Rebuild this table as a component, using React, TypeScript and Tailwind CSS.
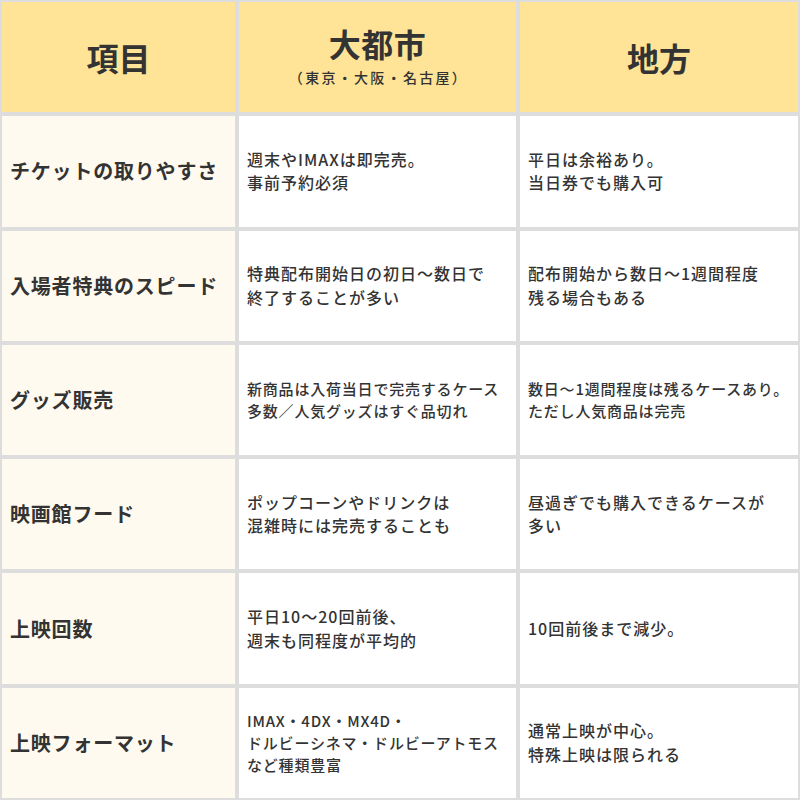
const rows: { label: string; city: string[]; local: string[]; smallCity?: boolean; smallLocal?: boolean }[] = [
  {
    label: "チケットの取りやすさ",
    city: ["週末やIMAXは即完売。", "事前予約必須"],
    local: ["平日は余裕あり。", "当日券でも購入可"],
  },
  {
    label: "入場者特典のスピード",
    city: ["特典配布開始日の初日〜数日で", "終了することが多い"],
    local: ["配布開始から数日〜1週間程度", "残る場合もある"],
  },
  {
    label: "グッズ販売",
    city: ["新商品は入荷当日で完売するケース", "多数／人気グッズはすぐ品切れ"],
    local: ["数日〜1週間程度は残るケースあり。", "ただし人気商品は完売"],
    smallCity: true,
    smallLocal: true,
  },
  {
    label: "映画館フード",
    city: ["ポップコーンやドリンクは", "混雑時には完売することも"],
    local: ["昼過ぎでも購入できるケースが", "多い"],
  },
  {
    label: "上映回数",
    city: ["平日10〜20回前後、", "週末も同程度が平均的"],
    local: ["10回前後まで減少。"],
  },
  {
    label: "上映フォーマット",
    city: ["IMAX・4DX・MX4D・", "ドルビーシネマ・ドルビーアトモス", "など種類豊富"],
    local: ["通常上映が中心。", "特殊上映は限られる"],
    smallCity: true,
  },
];

const Body = ({ lines, small }: { lines: string[]; small?: boolean }) => (
  <div className="bg-white flex items-center px-[8px]">
    <p
      className={
        small
          ? "text-[15px] leading-[22px] tracking-[0.8px] font-medium text-[#333333]"
          : "text-[16px] leading-[23.5px] tracking-[1px] font-medium text-[#333333]"
      }
    >
      {lines.map((l, i) => (
        <span key={i} className="block whitespace-nowrap">
          {l}
        </span>
      ))}
    </p>
  </div>
);

export default function App() {
  return (
    <div
      className="w-[800px] h-[800px] grid grid-cols-[233px_277px_1fr] grid-rows-7 gap-[4px] p-[2px] bg-[#dddddd] text-[#333333]"
      style={{ fontFamily: "'Noto Sans CJK JP', 'Noto Sans', sans-serif" }}
    >
      {/* Header */}
      <div className="bg-[#ffe396] flex items-center justify-center">
        <span className="text-[32px] font-bold">項目</span>
      </div>
      <div className="bg-[#ffe396] flex flex-col items-center justify-center pb-[6px]">
        <span className="text-[32px] font-bold leading-[40px] tracking-[0.5px]">大都市</span>
        <span className="text-[14px] font-medium leading-[18px] tracking-[2.3px] mt-[5px] pl-[2px]">（東京・大阪・名古屋）</span>
      </div>
      <div className="bg-[#ffe396] flex items-center justify-center">
        <span className="text-[32px] font-bold">地方</span>
      </div>

      {rows.map((r) => (
        <div key={r.label} className="contents">
          <div className="bg-[#fffaef] flex items-center px-[8px]">
            <span className="text-[20px] font-bold tracking-[0.8px] whitespace-nowrap">{r.label}</span>
          </div>
          <Body lines={r.city} small={r.smallCity} />
          <Body lines={r.local} small={r.smallLocal} />
        </div>
      ))}
    </div>
  );
}
